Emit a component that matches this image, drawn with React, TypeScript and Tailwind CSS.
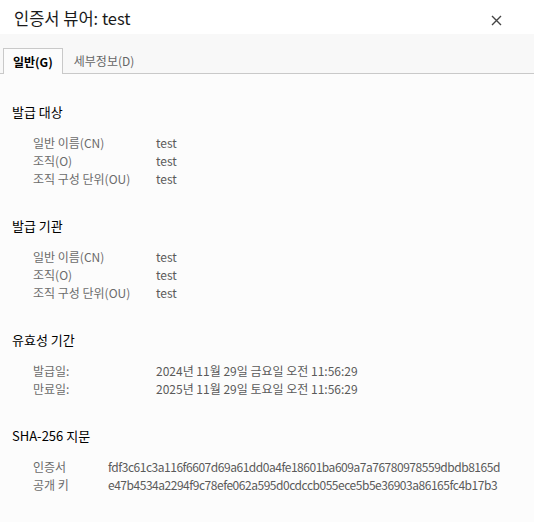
const font = { fontFamily: '"Noto Sans CJK KR", "Noto Sans", sans-serif' };

type Row = [string, string];

function Section({
  title,
  rows,
  keyCol,
  mono = false,
}: {
  title: string;
  rows: Row[];
  keyCol: string;
  mono?: boolean;
}) {
  return (
    <div className="mb-[28px]">
      <div className="text-[13px] leading-[20px] text-black pl-[12px] mb-[12px]">{title}</div>
      <div className="pl-[33px]">
        {rows.map(([k, v]) => (
          <div key={k} className="flex leading-[18px] text-[12px]">
            <div className={`${keyCol} shrink-0 text-[#6b6b6b]`}>{k}</div>
            <div className={`text-[#5a5a5a] whitespace-nowrap ${mono ? "tracking-[-0.47px]" : ""}`}>{v}</div>
          </div>
        ))}
      </div>
    </div>
  );
}

export default function App() {
  const subject: Row[] = [
    ["일반 이름(CN)", "test"],
    ["조직(O)", "test"],
    ["조직 구성 단위(OU)", "test"],
  ];
  const validity: Row[] = [
    ["발급일:", "2024년 11월 29일 금요일 오전 11:56:29"],
    ["만료일:", "2025년 11월 29일 토요일 오전 11:56:29"],
  ];
  const hashes: Row[] = [
    ["인증서", "fdf3c61c3a116f6607d69a61dd0a4fe18601ba609a7a76780978559dbdb8165d"],
    ["공개 키", "e47b4534a2294f9c78efe062a595d0cdccb055ece5b5e36903a86165fc4b17b3"],
  ];

  return (
    <div className="w-[534px] h-[522px] bg-[#fcfcfc] overflow-hidden" style={font}>
      {/* 제목 */}
      <div className="h-[34px] bg-white flex items-center pl-[14px] pr-[32px]">
        <div className="flex-1 text-[16.5px] text-[#1a1a1a] pt-[2px]">인증서 뷰어: test</div>
        <svg width="11" height="11" viewBox="0 0 11 11" className="mt-[6px]">
          <path d="M1 1L10 10M10 1L1 10" stroke="#444" strokeWidth="1.4" />
        </svg>
      </div>

      {/* 탭 */}
      <div className="h-[40px] bg-[#f8f8f8] border-b border-[#c9c9c9] flex items-end pl-[3px]">
        <div className="h-[26px] px-[9px] bg-[#fcfcfc] border border-b-0 border-[#c9c9c9] -mb-px flex items-center text-[12px] font-bold text-black">
          일반(G)
        </div>
        <div className="h-[25px] px-[11px] flex items-center text-[12px] text-[#666]">세부정보(D)</div>
      </div>

      {/* 내용 */}
      <div className="pt-[28px]">
        <Section title="발급 대상" rows={subject} keyCol="w-[123px]" />
        <Section title="발급 기관" rows={subject} keyCol="w-[123px]" />
        <Section title="유효성 기간" rows={validity} keyCol="w-[123px]" />
        <Section title="SHA-256 지문" rows={hashes} keyCol="w-[75px]" mono />
      </div>
    </div>
  );
}
